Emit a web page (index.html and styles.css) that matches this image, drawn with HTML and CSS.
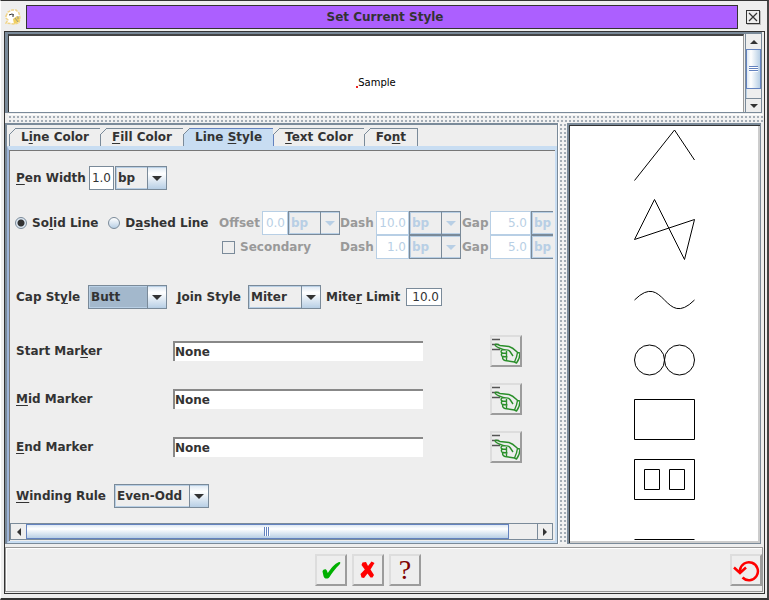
FILE: index.html
```html
<!DOCTYPE html>
<html lang="en">
<head>
<meta charset="utf-8">
<title>Set Current Style</title>
<link rel="stylesheet" href="styles.css">
</head>
<body>
<svg class="defs" aria-hidden="true">
  <symbol id="hand" viewBox="0 0 28 28">
    <path d="M0 2.500h8M0 7.500h7M0 12.500h8" stroke="#555" stroke-width="1.500" fill="none"/>
    <path d="M3 7.500C4 6.500 6 7.500 8 8.500L17 9.500C21 10.500 23 13 25.500 15.500M3 7.500C3 9.500 8 11.500 11 12.500C14 13.500 16 12 18 14.500L21 19M11 12.500C8.500 13 8.500 15.500 10.500 16C8.500 17 9.500 19.500 11 19.500C10 21 11 23 13 23.500L22.500 25M10.500 16L15 16.500M11 19.500L15.500 20M14.500 14V23M25.500 15.500L28 16C28 20 26 24 24.500 26L22.500 25C24 22 25 19 25.500 15.500" fill="none" stroke="#2a8f2a" stroke-width="1.400" stroke-linejoin="round"/>
  </symbol>
</svg>
<main class="window">
  <header class="titlebar">
    <svg class="logo" viewBox="0 0 16 16" aria-hidden="true">
      <path d="M1 7L3 3L7 1H11L14 4L15 9L14 14L9 15L1 14L3 11L1 9Z" fill="#fff" stroke="#f0d488" stroke-width="1.500" stroke-dasharray="3 1"/>
      <path d="M4 6L7 5L9 6M8 6V8" stroke="#333" fill="none"/>
      <path d="M8 10L12 7L15 9L14 13L9 15Z" fill="#f0cf60"/>
      <path d="M10 9L13 13M13 7V10" stroke="#998" fill="none"/>
    </svg>
    <h1 class="title">Set Current Style</h1>
    <button class="close" aria-label="Close"><svg viewBox="0 0 12 12"><path d="M2 2L10 10M10 2L2 10" stroke="#333" stroke-width="1.200"/></svg></button>
  </header>
  <div class="frame">
    <section class="preview">
      <div class="sample"><span class="origin"></span>Sample</div>
      <div class="vbar">
        <button class="arrow up" aria-label="Scroll up"></button>
        <div class="vthumb"><i class="grip"></i></div>
        <div class="vtrack"></div>
        <button class="arrow down" aria-label="Scroll down"></button>
      </div>
    </section>
    <div class="split-h"></div>
    <div class="middle">
      <section class="editor">
        <nav class="tabs">
          <button class="tab">L<u>i</u>ne Color</button>
          <button class="tab"><u>F</u>ill Color</button>
          <button class="tab selected">Line <u>S</u>tyle</button>
          <button class="tab"><u>T</u>ext Color</button>
          <button class="tab">Fo<u>n</u>t</button>
        </nav>
        <div class="pane">
          <form class="form">
            <div class="row">
              <label class="pen-label" for="pen"><u>P</u>en Width</label>
              <input class="num small" id="pen" value="1.0">
              <span class="combo unit"><select aria-label="Pen unit"><option>bp</option></select></span>
            </div>
            <div class="row dashes">
              <div class="radios">
                <label class="choice"><input type="radio" name="line" checked><span>So<u>l</u>id Line</span></label>
                <label class="choice"><input type="radio" name="line"><span>D<u>a</u>shed Line</span></label>
              </div>
              <div class="offset off">
                <label for="off">Offset</label>
                <input class="num" id="off" value="0.0" disabled>
                <span class="combo unit"><select aria-label="Offset unit" disabled><option>bp</option></select></span>
              </div>
              <label class="off" for="d1">Dash</label>
              <input class="num" id="d1" value="10.0" disabled>
              <span class="combo unit off"><select aria-label="Dash unit" disabled><option>bp</option></select></span>
              <label class="off gap" for="g1">Gap</label>
              <input class="num wide" id="g1" value="5.0" disabled>
              <span class="combo unit off"><select aria-label="Gap unit" disabled><option>bp</option></select></span>
              <label class="choice second off"><input type="checkbox" disabled><span>Secondary</span></label>
              <label class="off" for="d2">Dash</label>
              <input class="num" id="d2" value="1.0" disabled>
              <span class="combo unit off"><select aria-label="Second dash unit" disabled><option>bp</option></select></span>
              <label class="off gap" for="g2">Gap</label>
              <input class="num wide" id="g2" value="5.0" disabled>
              <span class="combo unit off"><select aria-label="Second gap unit" disabled><option>bp</option></select></span>
            </div>
            <div class="row spaced">
              <label class="cap-label" for="cap">Cap St<u>y</u>le</label>
              <span class="combo cap focus"><select id="cap"><option>Butt</option></select></span>
              <label class="next" for="join"><u>J</u>oin Style</label>
              <span class="combo join"><select id="join"><option>Miter</option></select></span>
              <label class="limit-label" for="limit">Mite<u>r</u> Limit</label>
              <input class="num limit" id="limit" value="10.0">
            </div>
            <div class="row marker">
              <label for="m1">Start Mar<u>k</u>er</label>
              <input class="text" id="m1" value="None" readonly>
              <button type="button" class="tool" aria-label="Choose start marker"><svg><use href="#hand"/></svg></button>
            </div>
            <div class="row marker">
              <label for="m2"><u>M</u>id Marker</label>
              <input class="text" id="m2" value="None" readonly>
              <button type="button" class="tool" aria-label="Choose mid marker"><svg><use href="#hand"/></svg></button>
            </div>
            <div class="row marker">
              <label for="m3"><u>E</u>nd Marker</label>
              <input class="text" id="m3" value="None" readonly>
              <button type="button" class="tool" aria-label="Choose end marker"><svg><use href="#hand"/></svg></button>
            </div>
            <div class="row spaced last">
              <label class="wind-label" for="wind"><u>W</u>inding Rule</label>
              <span class="combo wind"><select id="wind"><option>Even-Odd</option></select></span>
            </div>
          </form>
          <div class="hbar">
            <button class="arrow left" aria-label="Scroll left"></button>
            <div class="hthumb"><i class="grip"></i></div>
            <div class="htrack"></div>
            <button class="arrow right" aria-label="Scroll right"></button>
          </div>
        </div>
      </section>
      <div class="split-v"></div>
      <aside class="shapes">
        <svg viewBox="0 0 62 414" aria-hidden="true" fill="none" stroke="#000">
          <path d="M.5 52.500L40.500 2L60.500 32"/>
          <path d="M.5 111.500L20.500 71.500L50.500 131.500L60.500 91.500Z"/>
          <path d="M.5 172C30.500 142 30.500 202 60.500 172"/>
          <circle cx="15.500" cy="232" r="15"/><circle cx="45.500" cy="232" r="15"/>
          <path d="M.5 271.500h60v40h-60zM.5 331.500h60v40h-60zM10.500 341.500h15v20h-15zM35.500 341.500h15v20h-15zM.5 411.500h60"/>
        </svg>
      </aside>
    </div>
    <footer class="actions">
      <div class="main-actions">
        <button class="tool ok" aria-label="OK"><svg viewBox="0 0 28 28"><path d="M5.500 15.500C6 13 9.500 12.500 10 15L10.800 17C14 12 18 7.500 21.500 6.200C23.500 5.500 24 7 22.500 8.500C18 13 15 17 12.500 21C11 23.500 7 23 6.500 20Z" fill="#00b000"/></svg></button>
        <button class="tool cancel" aria-label="Cancel"><svg viewBox="0 0 28 28"><path d="M8.500 6.500L12 6L14 10L17.500 5.500L20.500 7L16.500 13.500L20 19L18.500 21.500L16.500 21.500L13.500 17.500L10 22L7.500 21.500L6.500 18L10.800 13.500L7.500 9Z" fill="#f00"/></svg></button>
        <button class="tool help">?</button>
      </div>
      <button class="tool reset" aria-label="Reset"><svg viewBox="0 0 28 28"><path d="M10.500 21.500A9 9 0 1 0 8 14V16M2 11.500L8 17L14 11.500" fill="none" stroke="#f00" stroke-width="2.500"/></svg></button>
    </footer>
  </div>
</main>
</body>
</html>
```
FILE: styles.css
```css
* { box-sizing: border-box; }
html, body { height: 100%; margin: 0; }
body {
  background: #eee;
  color: #333;
  font: bold 12px/18px "DejaVu Sans", sans-serif;
}
button, input, select { font: inherit; color: inherit; margin: 0; border-radius: 0; }
button { padding: 0; background: #eee; border: 0; }
u { text-decoration-thickness: 1px; text-underline-offset: 2px; }
.defs { display: none; }

.window {
  height: 100vh;
  display: flex;
  flex-direction: column;
  padding: 4px 1px 4px 3px;
  border: 1px solid #333;
  border-left-color: #fff;
  border-bottom: 2px solid #333;
  border-right: 2px solid #444;
}

.titlebar { display: flex; align-items: center; height: 24px; margin-bottom: 2px; gap: 5px; }
.logo { width: 16px; height: 16px; margin-left: 1px; flex: none; }
.title {
  flex: 1;
  height: 24px;
  margin: 0;
  padding-left: 6px;
  border: 1px solid #333;
  background: #ac5fff;
  font-size: 12px;
  line-height: 22px;
  text-align: center;
}
.close {
  width: 14px;
  height: 14px;
  margin: 0 6px 0 3px;
  border: 1px solid #333;
  box-shadow: 1px 1px #bbb;
}
.close svg { display: block; width: 12px; height: 12px; }

.frame {
  flex: 1;
  min-height: 0;
  display: flex;
  flex-direction: column;
  margin-right: 1px;
  border: 1px solid #333;
}

.preview {
  display: flex;
  height: 81px;
  flex: none;
  margin-right: 2px;
  border: 1px solid #7a8a99;
  border-top-width: 2px;
  border-left-width: 3px;
}
.sample {
  flex: 1;
  display: flex;
  align-items: center;
  justify-content: center;
  padding-top: 18px;
  background: #fff;
  border-top: 2px solid #444;
  border-left: 1px solid #333;
  border-right: 1px solid #999;
  color: #000;
  font: 10px/12px "DejaVu Sans", sans-serif;
}
.origin { width: 2px; height: 2px; margin-top: 7px; background: #e22; }
.vbar {
  width: 16px;
  display: flex;
  flex-direction: column;
  margin-left: 1px;
  border-left: 1px solid #7a8a99;
}
.arrow { display: grid; place-items: center; flex: none; }
.arrow::before { content: ""; border: 4px solid transparent; }
.up { height: 15px; }
.up::before { border-width: 0 4px 4px; border-bottom-color: #333; }
.down { height: 14px; border-top: 1px solid #7a8a99; }
.down::before { border-width: 4px 4px 0; border-top-color: #333; }
.vthumb {
  flex: 4;
  display: grid;
  place-items: center;
  border: 1px solid #6382bf;
  background: linear-gradient(90deg, #dde8f3, #fff 30%, #b8cfe5);
}
.vthumb .grip { width: 9px; height: 6px; background: repeating-linear-gradient(#6382bf 0 1px, #fff 1px 2px); }
.vtrack { flex: 1; border-left: 1px solid #b8cfe5; }

.split-h {
  height: 9px;
  flex: none;
  margin: 1px 1px 0 3px;
  border-top: 1px solid #fff;
  background: radial-gradient(circle, #a4adb6 0 1px, #f2f2f2 1px) 0 0 / 4px 4px;
}
.middle { flex: 1; min-height: 0; display: flex; }

.editor {
  flex: 1;
  min-width: 0;
  display: flex;
  flex-direction: column;
  border: 1px solid #7a8a99;
  border-top-width: 2px;
  border-left-width: 2px;
  padding-top: 3px;
}
.tabs { display: flex; height: 18px; padding-left: 2px; flex: none; }
.tab {
  position: relative;
  height: 18px;
  padding: 0 11px;
  border-top: 1px solid #7a8a99;
  border-right: 1px solid #7a8a99;
  line-height: 17px;
  white-space: nowrap;
}
.tab:first-child { border-left: 1px solid #7a8a99; }
.tab::before {
  content: "";
  position: absolute;
  left: -1px;
  top: -1px;
  width: 7px;
  height: 7px;
  background: linear-gradient(135deg, #eee 45%, #7a8a99 45% 55%, transparent 55%);
}
.tab.selected { background: #c8ddf2; border-color: #6382bf; }
.pane {
  flex: 1;
  min-height: 0;
  display: flex;
  flex-direction: column;
  padding: 0 1px 1px 0;
  border: 2px solid #c8ddf2;
  border-top-width: 4px;
  box-shadow: inset 1px 1px #777;
  background: #eee;
}
.tabs + .pane { border-left: 2px solid #9db4d8; }
.form {
  flex: 1;
  min-height: 0;
  overflow: hidden;
  margin: 1px 1px 0 1px;
  padding: 15px 0 0 6px;
}
.row { display: flex; align-items: center; }
.row label { white-space: nowrap; }
.pen-label { width: 73px; }
.dashes {
  display: grid;
  grid-template-columns: 203px 121px 36px 33px 52px 29px 41px 52px;
  grid-auto-rows: 24px;
  width: max-content;
  margin: 21px 0 26px;
}
.radios { display: flex; gap: 10px; margin-left: -1px; }
.choice { display: flex; align-items: center; gap: 5px; }
.choice input { appearance: none; flex: none; margin: 0; }
.choice input[type=radio] {
  width: 12px;
  height: 12px;
  border: 1px solid #7a8a99;
  border-radius: 50%;
  background: linear-gradient(#fff, #b8cfe5);
}
.choice input[type=radio]:checked { background: radial-gradient(circle, #333 0 3px, #dde8f3 4px); }
.choice input[type=checkbox] { width: 13px; height: 13px; border: 1px solid #7a8a99; }
.second { grid-column: 1 / 3; padding-left: 206px; }
.offset { display: flex; align-items: center; }
.offset label { width: 43px; }
.offset .num { width: 26px; }
.off { color: #999; }
.gap { padding-left: 1px; }

.num {
  width: 100%;
  height: 24px;
  padding: 0 2px 0 0;
  border: 1px solid #7a8a99;
  background: #fff;
  text-align: right;
  font: 12px/16px "DejaVu Sans", sans-serif;
}
.num.small { width: 25px; margin-right: 1px; }
.num.wide { padding-right: 3px; }
.num.limit { width: 36px; height: 18px; }
.num:disabled { color: #b8cfe5; border-color: #b8cfe5; }

.combo { position: relative; height: 24px; display: block; }
.combo select {
  appearance: none;
  width: 100%;
  height: 24px;
  display: block;
  padding: 0 0 0 2px;
  border: 1px solid #7a8a99;
  outline: 0;
  background: linear-gradient(#dde8f3, #fff 30%, #b8cfe5) right / 18px 100% no-repeat, #eee;
  box-shadow: inset 1px 1px #b8cfe5, inset 0 -1px #b8cfe5;
}
.combo::before {
  content: "";
  position: absolute;
  right: 19px;
  top: 1px;
  bottom: 1px;
  width: 1px;
  background: #7a8a99;
}
.combo::after {
  content: "";
  position: absolute;
  right: 5px;
  top: 10px;
  border: 5px solid transparent;
  border-top-color: #333;
  border-bottom: 0;
}
.unit { width: 52px; }
.focus select { background-color: #a3b8cc; }
.off select { background: #eee; color: #b8cfe5; opacity: 1; }
.off.combo::after, .off .combo::after { border-top-color: #b8cfe5; }
.cap { width: 79px; }
.join { width: 73px; }
.wind { width: 95px; }
.cap-label { width: 67px; }
.limit-label { width: 75px; }
.wind-label { width: 93px; }
.spaced { gap: 5px; }
.spaced .next { width: 66px; margin-left: 5px; }
.spaced + .marker { margin-top: 26px; }
.last { margin-top: 21px; }
.marker { margin-bottom: 16px; display: grid; grid-template-columns: 157px 250px 32px; column-gap: 0; }
.marker .tool { margin-left: 67px; }
.text {
  height: 20px;
  padding: 0 0 1px;
  border: 0;
  border-top: 2px solid #888;
  border-left: 2px solid #888;
  background: #fff;
  line-height: 17px;
}
.tool {
  width: 32px;
  height: 32px;
  display: grid;
  place-items: center;
  border: 2px solid;
  border-color: #ddd #9c9c9c #9c9c9c #ddd;
}
.tool svg { width: 28px; height: 28px; display: block; }

.hbar { display: flex; height: 17px; flex: none; border: 1px solid #7a8a99; border-right: 0; margin: 0 1px; }
.left { width: 15px; }
.left::before { border-width: 4px 4px 4px 0; border-right-color: #333; }
.right { width: 16px; border-left: 1px solid #7a8a99; border-right: 1px solid #7a8a99; }
.right::before { border-width: 4px 0 4px 4px; border-left-color: #333; }
.hthumb {
  flex: 17;
  display: grid;
  place-items: center;
  border: 1px solid #6382bf;
  background: linear-gradient(#dde8f3, #fff 30%, #b8cfe5);
}
.hthumb .grip { width: 6px; height: 9px; background: repeating-linear-gradient(90deg, #6382bf 0 1px, #fff 1px 2px); }
.htrack { flex: 1; }

.split-v {
  width: 9px;
  flex: none;
  border-left: 1px solid #fff;
  background: radial-gradient(circle, #a4adb6 0 1px, #f2f2f2 1px) 0 0 / 4px 4px;
}
.shapes {
  width: 194px;
  flex: none;
  overflow: hidden;
  margin-right: 3px;
  border: 2px solid #7a8a99;
  border-right-width: 1px;
  border-bottom-width: 1px;
  background: #fff;
  box-shadow: inset 1px 1px #333, inset -2px -2px #ccc;
}
.shapes svg { display: block; width: 62px; height: 414px; margin: 3px auto 0; }

.actions {
  display: flex;
  align-items: center;
  height: 45px;
  flex: none;
  margin: 3px 1px 1px 0;
  border: 1px solid #999;
  box-shadow: inset 1px 1px #fff;
}
.main-actions { flex: 1; display: flex; justify-content: center; gap: 5px; }
.help { color: #800000; font: 28px/28px "Liberation Serif", serif; }
```
